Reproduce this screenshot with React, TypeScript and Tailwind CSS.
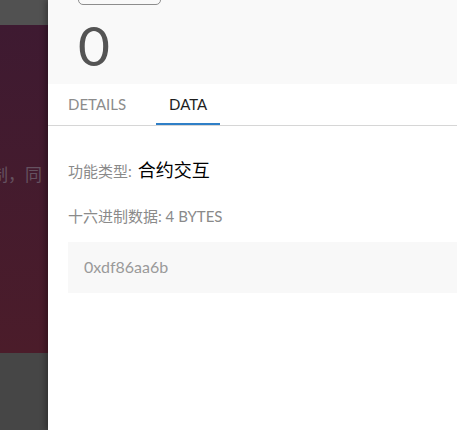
export default function App() {
  return (
    <div
      className="flex h-[430px] w-[457px] overflow-hidden bg-white"
      style={{ fontFamily: 'Lato, "Noto Sans CJK SC", sans-serif' }}
    >
      {/* dimmed page behind the drawer */}
      <div className="flex w-[48px] shrink-0 flex-col overflow-hidden">
        <div className="h-[25px] bg-[#515151]" />
        <div className="flex h-[328px] flex-col bg-gradient-to-b from-[#3e1a31] to-[#4b1c2a] pt-[137px]">
          <span className="-ml-[9px] whitespace-nowrap text-[17px] text-[#655260]">制，同</span>
        </div>
        <div className="flex-1 bg-[#464646]" />
      </div>

      {/* drawer */}
      <div className="relative flex min-w-0 flex-1 flex-col bg-white shadow-[-2px_0_6px_rgba(0,0,0,0.35)]">
        <div className="h-[84px] bg-[#f9f9f9] pl-[30px]">
          <div className="-mt-[20px] h-[25px] w-[83px] rounded-[5px] border border-[#8d8d8d]" />
          <div className="mt-[13px] text-[55px] leading-[55px] text-[#545454]">0</div>
        </div>

        <div className="flex h-[42px] items-stretch border-b border-[#d6d6d6] pl-[20px] text-[15px]">
          <div className="flex items-center text-[#8c8c8c]">DETAILS</div>
          <div className="ml-[30px] flex items-center border-b-2 border-[#2f7fc7] px-[13px] pt-[2px] text-[#1e1e1e]">
            DATA
          </div>
        </div>

        <div className="flex flex-col pl-[20px]">
          <div className="mt-[31px] flex items-baseline whitespace-nowrap">
            <span className="text-[15px] text-[#8a8a8a]">功能类型:</span>
            <span className="ml-[6px] text-[18px] text-black">合约交互</span>
          </div>
          <div className="mt-[21px] whitespace-nowrap text-[15px] text-[#8a8a8a]">十六进制数据: 4 BYTES</div>
          <div className="mt-[14px] flex h-[51px] items-center bg-[#f8f8f8] pl-[16px] text-[16px] text-[#9a9a9a]">
            0xdf86aa6b
          </div>
        </div>
      </div>
    </div>
  );
}
